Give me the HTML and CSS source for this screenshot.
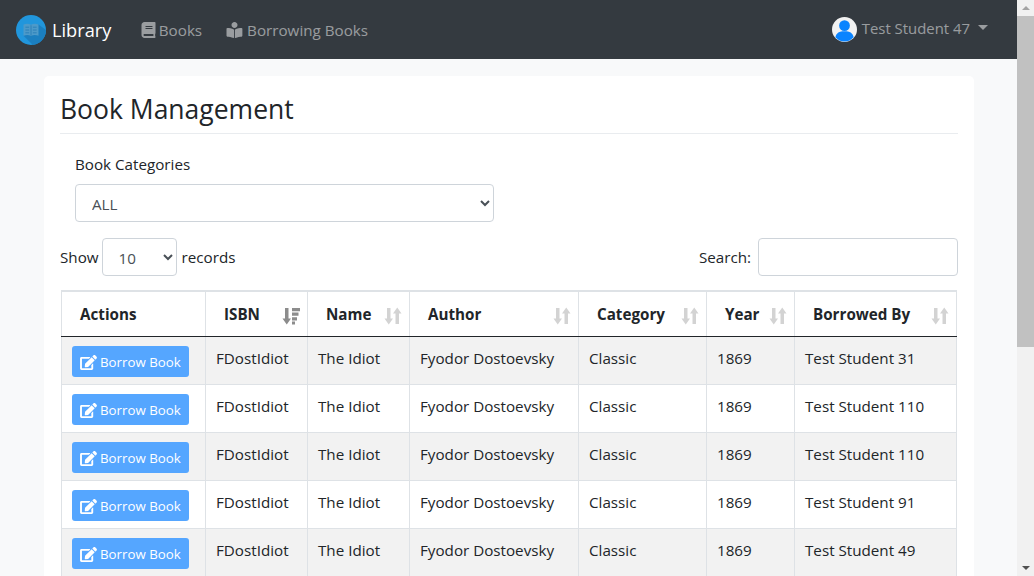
FILE: index.html
```html
<!doctype html>
<html lang="en">
<head>
	<title>Library</title>
	<meta charset="utf-8">
	<link rel="stylesheet" href="styles.css">
</head>
<body>

	<svg class="defs" width="0" height="0">
		<symbol id="i-book" viewBox="0 0 448 512"><path d="M448 360V24c0-13.3-10.7-24-24-24H96C43 0 0 43 0 96v320c0 53 43 96 96 96h328c13.3 0 24-10.7 24-24v-16c0-7.5-3.5-14.3-8.9-18.7-4.2-15.4-4.2-59.3 0-74.7 5.4-4.3 8.9-11.1 8.9-18.6zM128 134c0-3.3 2.7-6 6-6h212c3.3 0 6 2.7 6 6v20c0 3.3-2.7 6-6 6H134c-3.3 0-6-2.7-6-6v-20zm0 64c0-3.3 2.7-6 6-6h212c3.3 0 6 2.7 6 6v20c0 3.3-2.7 6-6 6H134c-3.3 0-6-2.7-6-6v-20zm253.4 250H96c-17.7 0-32-14.3-32-32 0-17.6 14.4-32 32-32h285.4c-1.9 17.1-1.9 46.9 0 64z"/></symbol>
		<symbol id="i-reader" viewBox="0 0 512 512"><path d="M352 96c0-53.02-42.98-96-96-96s-96 42.98-96 96 42.98 96 96 96 96-42.98 96-96zM233.59 241.1c-59.33-36.32-155.43-46.3-203.79-49.05C13.55 191.13 0 203.51 0 219.14v222.8c0 14.33 11.59 26.28 26.49 27.05 43.66 2.29 131.99 10.68 193.04 41.43 9.37 4.72 20.48-1.71 20.48-12.06V251.56c-.01-4.75-2.41-9.11-6.42-10.46zm244.61-49.05c-48.35 2.74-144.46 12.73-203.78 49.05-4.01 1.35-6.41 5.86-6.41 10.62v246.6c0 10.38 11.14 16.84 20.54 12.09 61.03-30.72 149.31-39.11 192.96-41.4 14.9-.78 26.49-12.73 26.49-27.06V219.14c-.01-15.63-13.56-28.01-29.8-27.09z"/></symbol>
		<symbol id="i-edit" viewBox="0 0 576 512"><path d="M402.6 83.2l90.2 90.2c3.8 3.8 3.8 10 0 13.8L274.4 405.6l-92.8 10.3c-12.4 1.4-22.9-9.1-21.5-21.5l10.3-92.8L388.8 83.2c3.8-3.8 10-3.8 13.8 0zm162-22.9l-48.8-48.8c-15.2-15.2-39.9-15.2-55.2 0l-35.4 35.4c-3.8 3.8-3.8 10 0 13.8l90.2 90.2c3.8 3.8 10 3.8 13.8 0l35.4-35.4c15.2-15.3 15.2-40 0-55.2zM384 346.2V448H64V128h229.8c3.2 0 6.2-1.3 8.5-3.5l40-40c7.6-7.6 2.2-20.5-8.5-20.5H48C21.5 64 0 85.5 0 112v352c0 26.5 21.5 48 48 48h352c26.5 0 48-21.5 48-48V306.2c0-10.7-12.9-16-20.5-8.5l-40 40c-2.2 2.3-3.5 5.3-3.5 8.5z"/></symbol>
		<symbol id="i-sort" viewBox="0 0 18 18"><path d="M3 1h3.500v10.500H9L4.750 17.500 .500 11.500H3zM11.500 17h3.500V6.500h2.500L13.250 .5 9 6.500h2.500z"/></symbol>
		<symbol id="i-sort-down" viewBox="0 0 18 18"><path d="M3 1h3.500v10.500H9L4.750 17.500 .500 11.500H3zM10 1h8v3.200h-8zM10 5.600h6.500v3.200H10zM10 10.200h5v3.200h-5zM10 14.600h3v2.900h-3z"/></symbol>
	</svg>

	<div class="window">
		<div class="page">

			<nav class="navbar">
				<a class="brand">
					<svg class="brand-logo" viewBox="0 0 32 32">
						<circle cx="16" cy="16" r="16" fill="#2196dc"/>
						<path d="M8 22 L24 10 L32 16 A16 16 0 0 1 18 31.900z" fill="#1b7fc0"/>
						<path d="M8 10c3-1 6-1 8 .500 2-1.500 5-1.500 8-.500v12c-3-1-6-1-8 .500-2-1.500-5-1.500-8-.500z" fill="#4d9ac9"/>
						<path d="M16 11v11M10 13h4M10 16h4M10 19h4M18 13h4M18 16h4M18 19h4" stroke="#2a7fb8" stroke-width="1"/>
					</svg>
					Library
				</a>
				<a class="nav-link"><svg class="nav-icon book"><use href="#i-book"/></svg>Books</a>
				<a class="nav-link"><svg class="nav-icon"><use href="#i-reader"/></svg>Borrowing Books</a>
				<a class="nav-link user">
					<svg class="avatar" viewBox="0 0 26 26">
						<circle cx="13" cy="13" r="13" fill="#f1f1f1"/>
						<circle cx="13" cy="9" r="5.600" fill="#0a84ff"/>
						<path d="M3.500 21c1-4.500 4-6.200 9.500-6.200s8.500 1.700 9.500 6.200A12.600 12.600 0 0 1 13 25.500 12.600 12.600 0 0 1 3.500 21z" fill="#0a84ff"/>
					</svg>
					<span class="user-name">Test Student 47</span>
					<span class="caret"></span>
				</a>
			</nav>

			<div class="content">
				<div class="card">
					<h2 class="title">Book Management</h2>

					<div class="category">
						<label class="field-label">Book Categories</label>
						<select class="control"><option>ALL</option></select>
					</div>

					<div class="table-tools">
						<div class="tool">Show <select class="control small"><option>10</option></select> records</div>
						<div class="tool">Search: <input class="control search" type="text"></div>
					</div>

					<table class="books">
						<colgroup>
							<col class="c-actions"><col class="c-isbn"><col class="c-name"><col class="c-author"><col class="c-cat"><col class="c-year"><col class="c-by">
						</colgroup>
						<thead>
							<tr>
								<th>Actions</th>
								<th>ISBN<svg class="sort active"><use href="#i-sort-down"/></svg></th>
								<th>Name<svg class="sort"><use href="#i-sort"/></svg></th>
								<th>Author<svg class="sort"><use href="#i-sort"/></svg></th>
								<th>Category<svg class="sort"><use href="#i-sort"/></svg></th>
								<th>Year<svg class="sort"><use href="#i-sort"/></svg></th>
								<th>Borrowed By<svg class="sort"><use href="#i-sort"/></svg></th>
							</tr>
						</thead>
						<tbody>
							<tr>
								<td><a class="btn"><svg class="btn-icon"><use href="#i-edit"/></svg>Borrow Book</a></td>
								<td>FDostIdiot</td><td>The Idiot</td><td>Fyodor Dostoevsky</td><td>Classic</td><td>1869</td><td>Test Student 31</td>
							</tr>
							<tr>
								<td><a class="btn"><svg class="btn-icon"><use href="#i-edit"/></svg>Borrow Book</a></td>
								<td>FDostIdiot</td><td>The Idiot</td><td>Fyodor Dostoevsky</td><td>Classic</td><td>1869</td><td>Test Student 110</td>
							</tr>
							<tr>
								<td><a class="btn"><svg class="btn-icon"><use href="#i-edit"/></svg>Borrow Book</a></td>
								<td>FDostIdiot</td><td>The Idiot</td><td>Fyodor Dostoevsky</td><td>Classic</td><td>1869</td><td>Test Student 110</td>
							</tr>
							<tr>
								<td><a class="btn"><svg class="btn-icon"><use href="#i-edit"/></svg>Borrow Book</a></td>
								<td>FDostIdiot</td><td>The Idiot</td><td>Fyodor Dostoevsky</td><td>Classic</td><td>1869</td><td>Test Student 91</td>
							</tr>
							<tr>
								<td><a class="btn"><svg class="btn-icon"><use href="#i-edit"/></svg>Borrow Book</a></td>
								<td>FDostIdiot</td><td>The Idiot</td><td>Fyodor Dostoevsky</td><td>Classic</td><td>1869</td><td>Test Student 49</td>
							</tr>
						</tbody>
					</table>
				</div>
			</div>
		</div>

		<div class="scrollbar">
			<span class="arrow up"></span>
			<div class="track"><div class="thumb"></div></div>
			<span class="arrow down"></span>
		</div>
	</div>

</body>
</html>
```

FILE: styles.css
```css
* { box-sizing: border-box; }
html, body { margin: 0; height: 100%; overflow: hidden; }
body { background: #f8f9fa; color: #212529; font-family: "Open Sans", "Noto Sans", sans-serif; font-size: 15.2px; line-height: 24px; }
.defs { position: absolute; }

.window { display: flex; height: 576px; overflow: hidden; }
.page { flex: 1; min-width: 0; }

/* navbar */
.navbar { display: flex; align-items: center; height: 59px; padding: 0 16px; background: #343a40; }
.brand { display: flex; align-items: center; color: #fff; font-size: 18.200px; margin-right: 17.500px; }
.brand-logo { width: 30px; height: 30px; margin-right: 6px; }
.nav-link { display: flex; align-items: center; padding: 0 12px; color: rgba(255,255,255,.5); }
.nav-icon { width: 17px; height: 16px; fill: rgba(255,255,255,.5); margin-right: 4px; }
.nav-icon.book { width: 15px; margin-right: 3px; }
.user { margin-left: auto; margin-right: 1px; }
.user-name { padding-bottom: 3px; font-size: 14.900px; }
.avatar { width: 25px; height: 25px; margin-right: 5px; }
.caret { width: 0; height: 0; margin-left: 8px; margin-bottom: 4px; border-top: 5px solid rgba(255,255,255,.5); border-left: 5px solid transparent; border-right: 5px solid transparent; }

/* card */
.content { padding: 17px 43px 0 44px; }
.card { background: #fff; border-radius: 5px; padding: 16px; height: 600px; }
.title { margin: 0; padding: 0 0 7px; height: 42px; font-size: 26.500px; font-weight: 400; line-height: 34px; border-bottom: 1px solid #e9ecef; }

.category { width: 449px; padding: 0 15px; margin-top: 18px; }
.field-label { display: block; margin-bottom: 8px; }
.control { display: block; width: 100%; height: 38px; padding: 7px 12px 5px; background: #fff; color: #495057; border: 1px solid #ced4da; border-radius: 4px; font: inherit; }
.control.small { display: inline-block; width: 75px; margin: 0 2px 0 0; }
.control.search { display: inline-block; width: 200px; margin-left: 4px; }

.table-tools { display: flex; justify-content: space-between; margin-top: 16px; }
.tool { display: flex; align-items: center; gap: 3px; height: 38px; }

/* table */
.books { width: 895px; margin: 14px 0 0 1px; border-collapse: collapse; table-layout: fixed; border-top: 2px solid #dee2e6; }
.c-actions { width: 144px; }
.c-isbn, .c-name { width: 102px; }
.c-author { width: 169px; }
.c-cat { width: 128px; }
.c-year { width: 88px; }
.c-by { width: 162px; }

.books th { position: relative; height: 45px; padding: 0 18px; border: 1px solid #dee2e6; border-top: 0; border-bottom: 1px solid #212529; text-align: left; font-weight: 700; }
.books td { height: 48px; padding: 9px 10px 7px; border: 1px solid #dee2e6; vertical-align: top; white-space: nowrap; }
.books tbody tr:nth-child(odd) td { background: #f2f2f2; }

.sort { position: absolute; right: 7px; top: 15px; width: 18px; height: 18px; fill: #d3d3d3; }
.sort.active { fill: #8c8c8c; }

.btn { display: inline-flex; vertical-align: top; align-items: center; height: 31px; padding: 2px 8px 0; background: #55a6ff; color: #fff; border-radius: 3px; font-size: 13.300px; }
.btn-icon { width: 17px; height: 15px; fill: #fff; margin-right: 3px; }

/* scrollbar */
.scrollbar { display: flex; flex-direction: column; align-items: center; width: 17px; background: #f1f1f1; }
.arrow { width: 0; height: 0; margin: 6px 0; border-left: 4px solid transparent; border-right: 4px solid transparent; }
.arrow.up { border-bottom: 4px solid #a3a3a3; }
.arrow.down { border-top: 4px solid #505050; }
.track { flex: 1; width: 100%; }
.thumb { height: 331px; background: #c1c1c1; }
```
